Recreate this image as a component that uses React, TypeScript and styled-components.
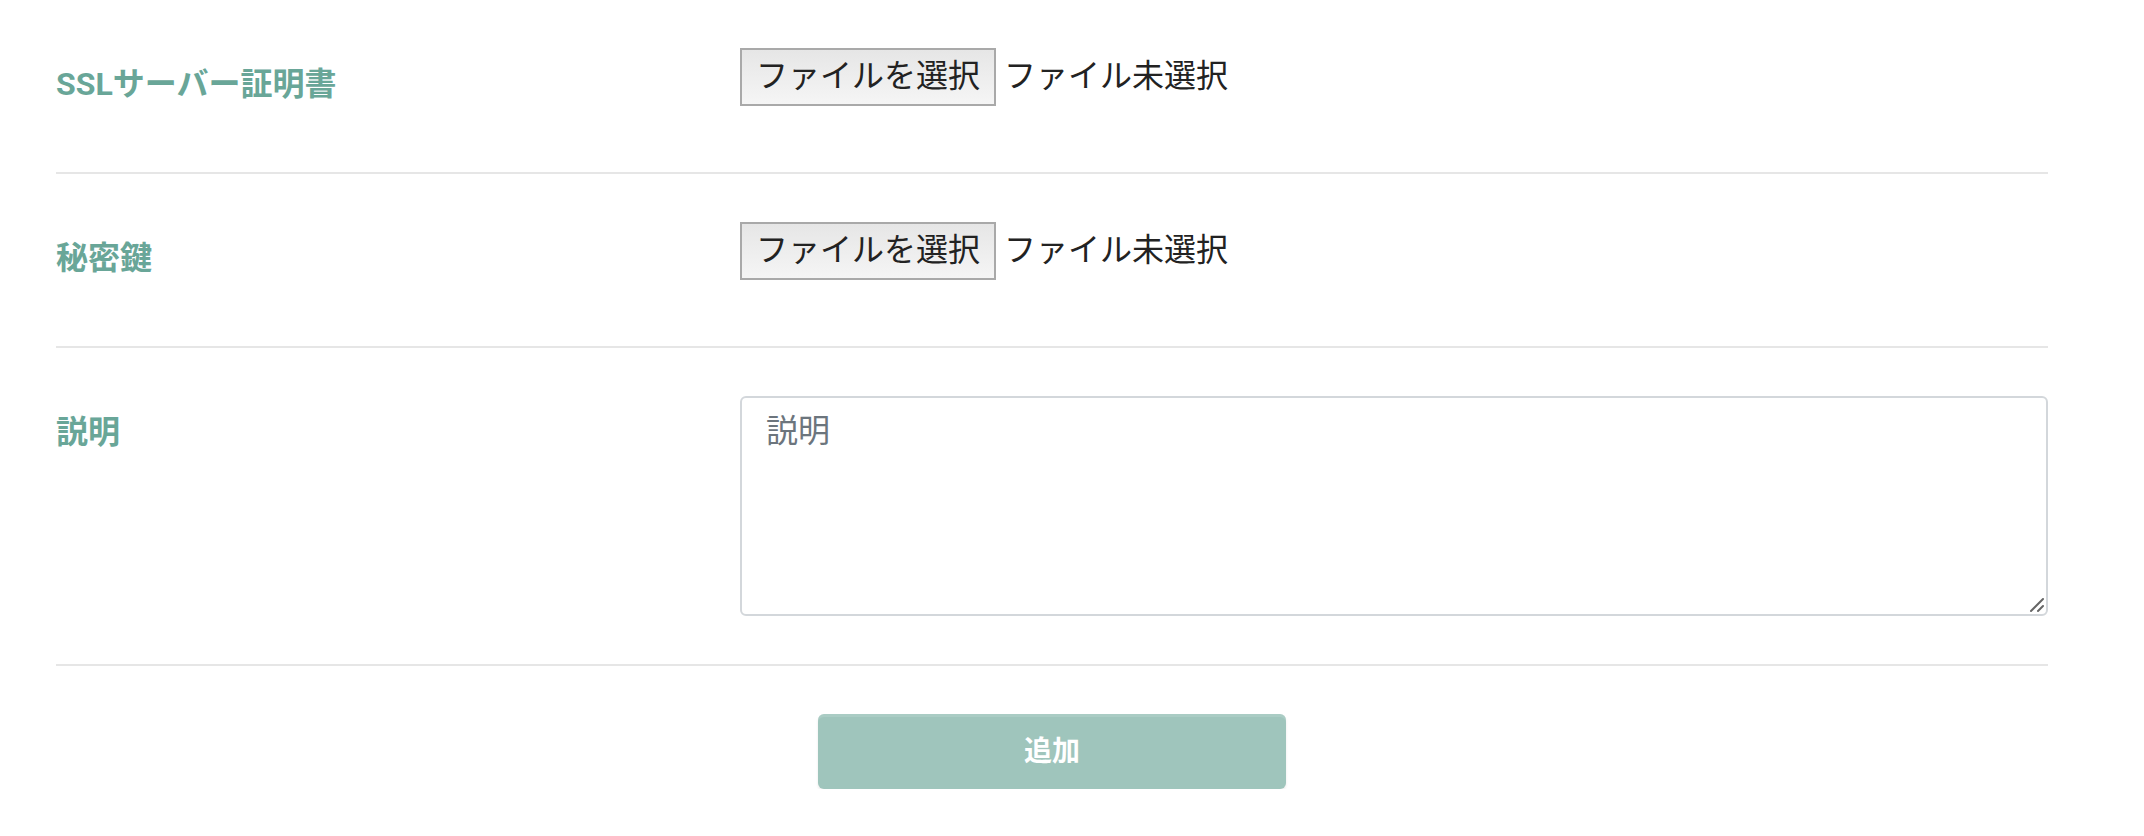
import React from "react";
import styled, { createGlobalStyle } from "styled-components";

const GlobalStyle = createGlobalStyle`
    html, body {
        margin: 0;
        padding: 0;
        background: #fff;
    }
    body {
        font-family: Roboto, "Noto Sans CJK JP", sans-serif;
        color: #212529;
    }
`;

const Page = styled.div`
    width: 1992px;
    padding-left: 56px;
`;

const FormRow = styled.div`
    display: grid;
    grid-template-columns: 684px 1fr;
    padding: 48px 0;
    border-bottom: 2px solid #e6e6e6;
`;

const Label = styled.div`
    font-family: Roboto, "Noto Sans CJK JP", sans-serif;
    font-size: 32px;
    font-weight: 700;
    line-height: 48px;
    color: #69a698;
    padding: 12px 0 16px;
`;

const FileField = styled.div`
    display: flex;
    align-items: baseline;
`;

const FileButton = styled.button`
    box-sizing: border-box;
    height: 58px;
    padding: 0 14px 8px;
    border: 2px solid #a9a9a9;
    border-radius: 0;
    background: linear-gradient(#e6e6e6, #f5f5f5);
    font-family: "Noto Sans CJK JP", sans-serif;
    font-size: 32px;
    line-height: 32px;
    color: #222;
`;

const FileName = styled.span`
    margin-left: 8px;
    font-family: "Noto Sans CJK JP", sans-serif;
    font-size: 32px;
    line-height: 32px;
    color: #222;
`;

const TextAreaWrap = styled.div`
    position: relative;
`;

const TextArea = styled.textarea`
    box-sizing: border-box;
    display: block;
    width: 100%;
    height: 220px;
    margin: 0;
    padding: 6px 24px;
    border: 2px solid #d3d7db;
    border-radius: 6px;
    font-family: "Noto Sans CJK JP", sans-serif;
    font-size: 32px;
    line-height: 1.5;
    color: #495057;
    resize: none;
    outline: none;

    &::placeholder {
        color: #6c757d;
    }
`;

const Grip = styled.svg`
    position: absolute;
    right: 3px;
    bottom: 3px;
    width: 16px;
    height: 16px;
    pointer-events: none;
`;

const Actions = styled.div`
    display: flex;
    justify-content: center;
    padding-top: 48px;
`;

const SubmitButton = styled.button`
    width: 468px;
    height: 75px;
    padding: 0 0 6px;
    border: none;
    border-radius: 6px;
    background: #9fc5bc;
    box-shadow: inset 0 3px 0 rgba(255, 255, 255, 0.12), 0 2px 3px rgba(0, 0, 0, 0.08);
    font-family: Roboto, "Noto Sans CJK JP", sans-serif;
    font-size: 28px;
    font-weight: 700;
    color: #fff;
    cursor: default;
`;

function FilePicker()
{
    return (
        <FileField>
            <FileButton type="button">ファイルを選択</FileButton>
            <FileName>ファイル未選択</FileName>
        </FileField>
    );
}

function App(): React.ReactElement
{
    return (
        <>
            <GlobalStyle />
            <Page>
                <FormRow>
                    <Label>SSLサーバー証明書</Label>
                    <FilePicker />
                </FormRow>
                <FormRow>
                    <Label>秘密鍵</Label>
                    <FilePicker />
                </FormRow>
                <FormRow>
                    <Label>説明</Label>
                    <TextAreaWrap>
                        <TextArea placeholder="説明" />
                        <Grip viewBox="0 0 16 16">
                            <path d="M2 14 L14 2 M9 14 L14 9" stroke="#666" strokeWidth="2" strokeLinecap="round" />
                        </Grip>
                    </TextAreaWrap>
                </FormRow>
                <Actions>
                    <SubmitButton type="button" disabled>追加</SubmitButton>
                </Actions>
            </Page>
        </>
    );
}

export default App;
